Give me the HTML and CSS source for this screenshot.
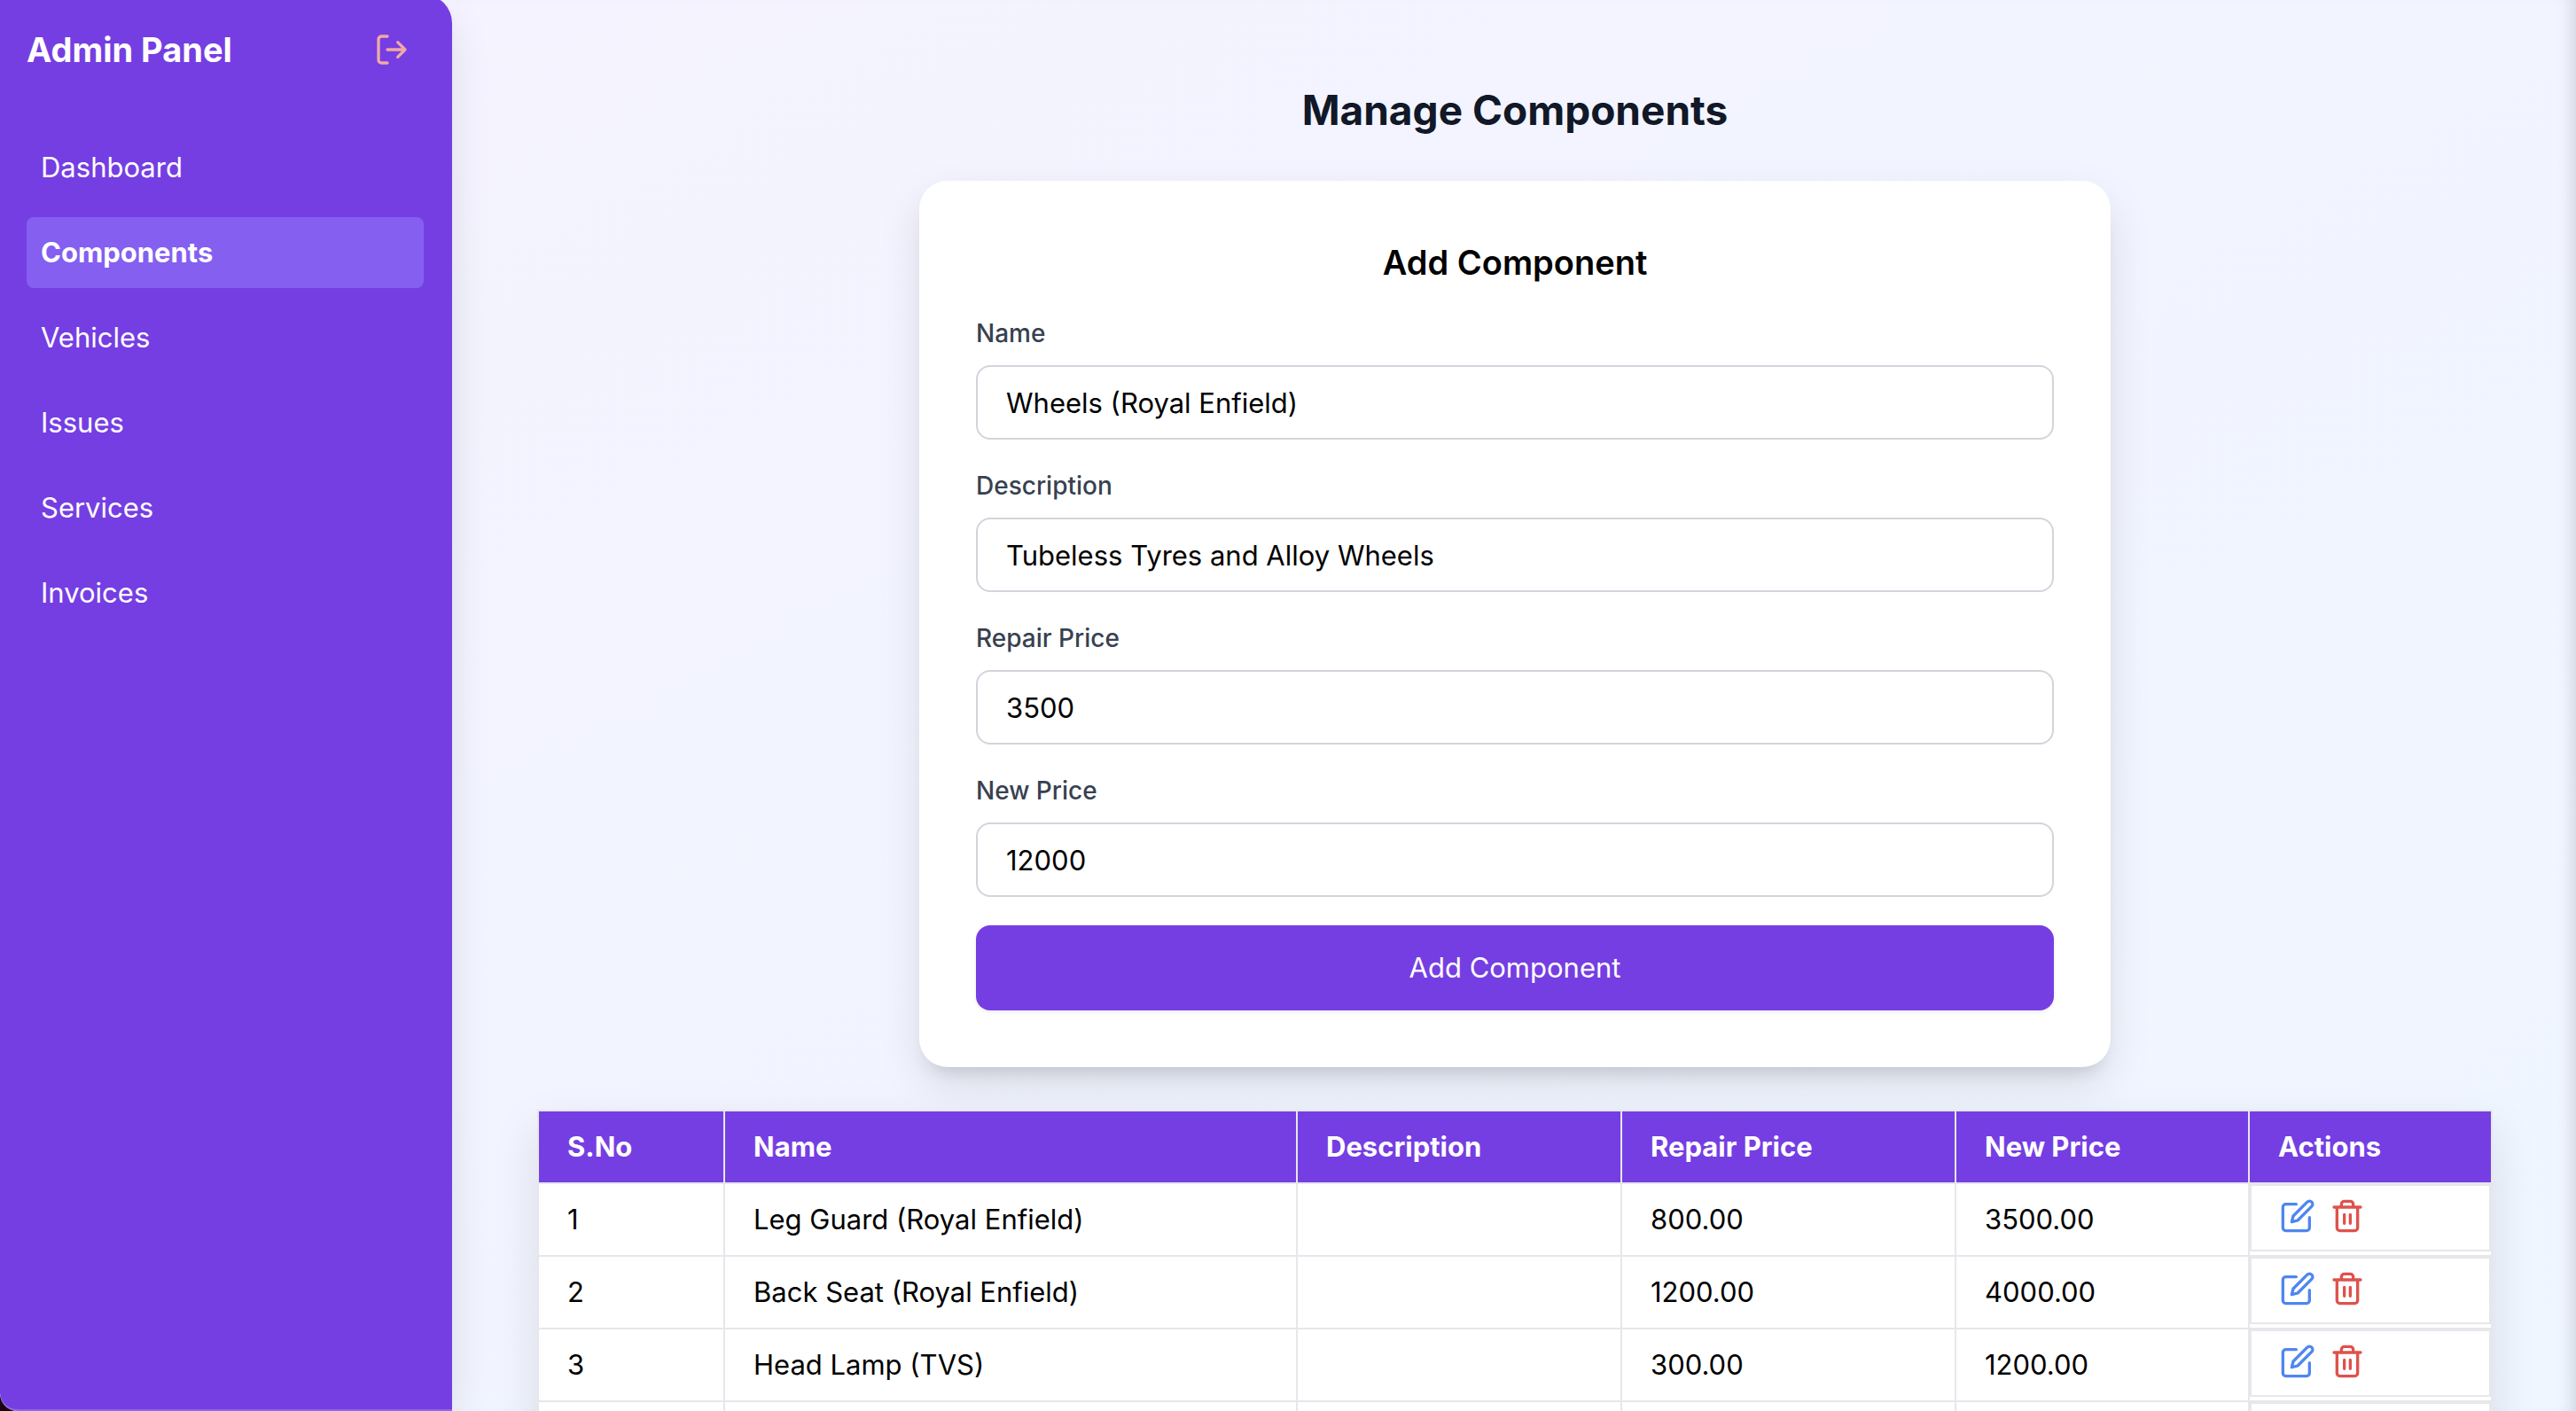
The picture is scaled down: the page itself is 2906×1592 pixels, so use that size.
FILE: index.html
```html
<!DOCTYPE html>
<html lang="en">
<head>
<meta charset="utf-8">
<meta name="viewport" content="width=device-width, initial-scale=1">
<title>Manage Components</title>
<link rel="stylesheet" href="styles.css">
</head>
<body>
<svg class="sprite" aria-hidden="true">
  <symbol id="icon-edit" viewBox="0 0 24 24"><path d="M11 4H4a2 2 0 0 0-2 2v14a2 2 0 0 0 2 2h14a2 2 0 0 0 2-2v-7"/><path d="M18.500 2.500a2.121 2.121 0 0 1 3 3L12 15l-4 1 1-4 9.500-9.500z"/></symbol>
  <symbol id="icon-trash" viewBox="0 0 24 24"><path d="M3 6h18M19 6v14a2 2 0 0 1-2 2H7a2 2 0 0 1-2-2V6m3 0V4a2 2 0 0 1 2-2h4a2 2 0 0 1 2 2v2M10 11v6M14 11v6"/></symbol>
</svg>
<div class="app">
  <aside class="sidebar">
    <header class="sidebar-head">
      <h2 class="brand">Admin Panel</h2>
      <button class="icon-button logout" type="button" aria-label="Log out">
        <svg viewBox="0 0 24 24"><path d="M9 21H5a2 2 0 0 1-2-2V5a2 2 0 0 1 2-2h4M16 17l5-5-5-5M21 12H9"/></svg>
      </button>
    </header>
    <nav class="nav">
      <a class="nav-link" href="#">Dashboard</a>
      <a class="nav-link active" href="#" aria-current="page">Components</a>
      <a class="nav-link" href="#">Vehicles</a>
      <a class="nav-link" href="#">Issues</a>
      <a class="nav-link" href="#">Services</a>
      <a class="nav-link" href="#">Invoices</a>
    </nav>
  </aside>
  <main class="main">
    <h1 class="title">Manage Components</h1>
    <form class="card">
      <h2 class="card-title">Add Component</h2>
      <div class="field"><label for="name">Name</label><input id="name" type="text" value="Wheels (Royal Enfield)"></div>
      <div class="field"><label for="description">Description</label><input id="description" type="text" value="Tubeless Tyres and Alloy Wheels"></div>
      <div class="field"><label for="repair">Repair Price</label><input id="repair" type="text" inputmode="numeric" value="3500"></div>
      <div class="field"><label for="new">New Price</label><input id="new" type="text" inputmode="numeric" value="12000"></div>
      <button class="submit" type="submit">Add Component</button>
    </form>
    <table class="table">
      <colgroup><col class="col-no"><col class="col-name"><col class="col-desc"><col class="col-repair"><col class="col-new"><col class="col-actions"></colgroup>
      <thead>
        <tr><th>S.No</th><th>Name</th><th>Description</th><th>Repair Price</th><th>New Price</th><th>Actions</th></tr>
      </thead>
      <tbody>
        <tr><td>1</td><td>Leg Guard (Royal Enfield)</td><td></td><td>800.00</td><td>3500.00</td>
          <td class="actions-cell"><div class="actions"><button class="icon-button edit" type="button" aria-label="Edit"><svg><use href="#icon-edit"/></svg></button><button class="icon-button delete" type="button" aria-label="Delete"><svg><use href="#icon-trash"/></svg></button></div></td></tr>
        <tr><td>2</td><td>Back Seat (Royal Enfield)</td><td></td><td>1200.00</td><td>4000.00</td>
          <td class="actions-cell"><div class="actions"><button class="icon-button edit" type="button" aria-label="Edit"><svg><use href="#icon-edit"/></svg></button><button class="icon-button delete" type="button" aria-label="Delete"><svg><use href="#icon-trash"/></svg></button></div></td></tr>
        <tr><td>3</td><td>Head Lamp (TVS)</td><td></td><td>300.00</td><td>1200.00</td>
          <td class="actions-cell"><div class="actions"><button class="icon-button edit" type="button" aria-label="Edit"><svg><use href="#icon-edit"/></svg></button><button class="icon-button delete" type="button" aria-label="Delete"><svg><use href="#icon-trash"/></svg></button></div></td></tr>
        <tr><td></td><td></td><td></td><td></td><td></td><td class="actions-cell"><div class="actions"></div></td></tr>
      </tbody>
    </table>
  </main>
</div>
</body>
</html>
```
FILE: styles.css
```css
:root {
  --purple: #753ee3;
  --line: #e5e7eb;
}
* { box-sizing: border-box; margin: 0; }
body {
  font-family: Inter, "Liberation Sans", sans-serif;
  font-size: 31px;
  line-height: 48px;
  color: #000;
  background: #1c0410;
}
.sprite { display: none; }
.app {
  display: flex;
  height: 100vh;
  overflow: hidden;
  border-bottom-left-radius: 20px;
  background: linear-gradient(to bottom right, #f5f3ff, #eff6ff);
}
.sidebar {
  flex: 0 0 510px;
  margin-top: -6px;
  padding: 32px 32px 32px 30px;
  color: #fff;
  background: var(--purple);
  border-bottom: 2px solid #9165e9;
  border-radius: 0 32px 0 20px;
  box-shadow: 0 20px 50px -4px rgb(0 0 0 / 12%);
}
.sidebar-head {
  display: flex;
  align-items: center;
  justify-content: space-between;
  height: 60px;
  padding-right: 16px;
  margin-bottom: 63px;
}
.brand { font-size: 38px; font-weight: 700; }
.icon-button {
  display: flex;
  padding: 0;
  border: 0;
  background: none;
  cursor: pointer;
}
.icon-button svg {
  width: 40px;
  height: 40px;
  fill: none;
  stroke: currentColor;
  stroke-width: 2;
  stroke-linecap: round;
  stroke-linejoin: round;
}
.logout { color: #f0a9a5; }
.nav { display: flex; flex-direction: column; gap: 16px; }
.nav-link {
  padding: 16px;
  border-radius: 8px;
  color: inherit;
  text-decoration: none;
}
.nav-link.active { background: #855ff0; font-weight: 700; }
.main {
  flex: 1;
  display: flex;
  flex-direction: column;
  align-items: center;
  padding: 94px 94px 0 96px;
  box-shadow: inset -16px 0 20px -14px rgb(0 0 0 / 16%);
}
.title {
  margin-bottom: 50px;
  font-size: 46px;
  line-height: 60px;
  font-weight: 700;
  color: #111827;
}
.card {
  width: 100%;
  max-width: 1344px;
  margin-bottom: 48px;
  padding: 64px;
  border-radius: 32px;
  background: #fff;
  box-shadow: 0 20px 50px rgb(0 0 0 / 10%), 0 16px 20px -12px rgb(0 0 0 / 14%);
}
.card-title {
  margin-bottom: 32px;
  text-align: center;
  font-size: 38px;
  line-height: 56px;
  font-weight: 600;
}
.field { margin-bottom: 32px; }
.field label {
  display: block;
  margin-bottom: 16px;
  font-size: 28px;
  line-height: 40px;
  font-weight: 500;
  color: #374151;
}
.field input {
  display: block;
  width: 100%;
  height: 84px;
  padding: 0 32px;
  border: 2px solid #d1d5db;
  border-radius: 16px;
  background: #fff;
  font: inherit;
  color: inherit;
}
.submit {
  display: block;
  width: 100%;
  padding: 24px;
  border: 0;
  border-radius: 16px;
  background: var(--purple);
  color: #fff;
  font: inherit;
  box-shadow: 0 2px 4px rgb(0 0 0 / 8%);
}
.table {
  width: 100%;
  table-layout: fixed;
  border-collapse: collapse;
  background: #fff;
  box-shadow: 0 20px 50px rgb(0 0 0 / 10%);
}
.col-no { width: 210px; }
.col-name { width: 646px; }
.col-desc { width: 366px; }
.col-repair { width: 377px; }
.col-new { width: 331px; }
.table th, .table td {
  height: 82px;
  padding: 16px 32px;
  border: 2px solid var(--line);
  text-align: left;
}
.table th { background: var(--purple); color: #fff; font-weight: 700; }
.table .actions-cell { padding: 0; vertical-align: top; }
.actions {
  display: flex;
  gap: 16px;
  height: 76px;
  padding: 14px 32px;
  border: 2px solid var(--line);
}
.edit { color: #4f86f0; }
.delete { color: #df524c; }
```
